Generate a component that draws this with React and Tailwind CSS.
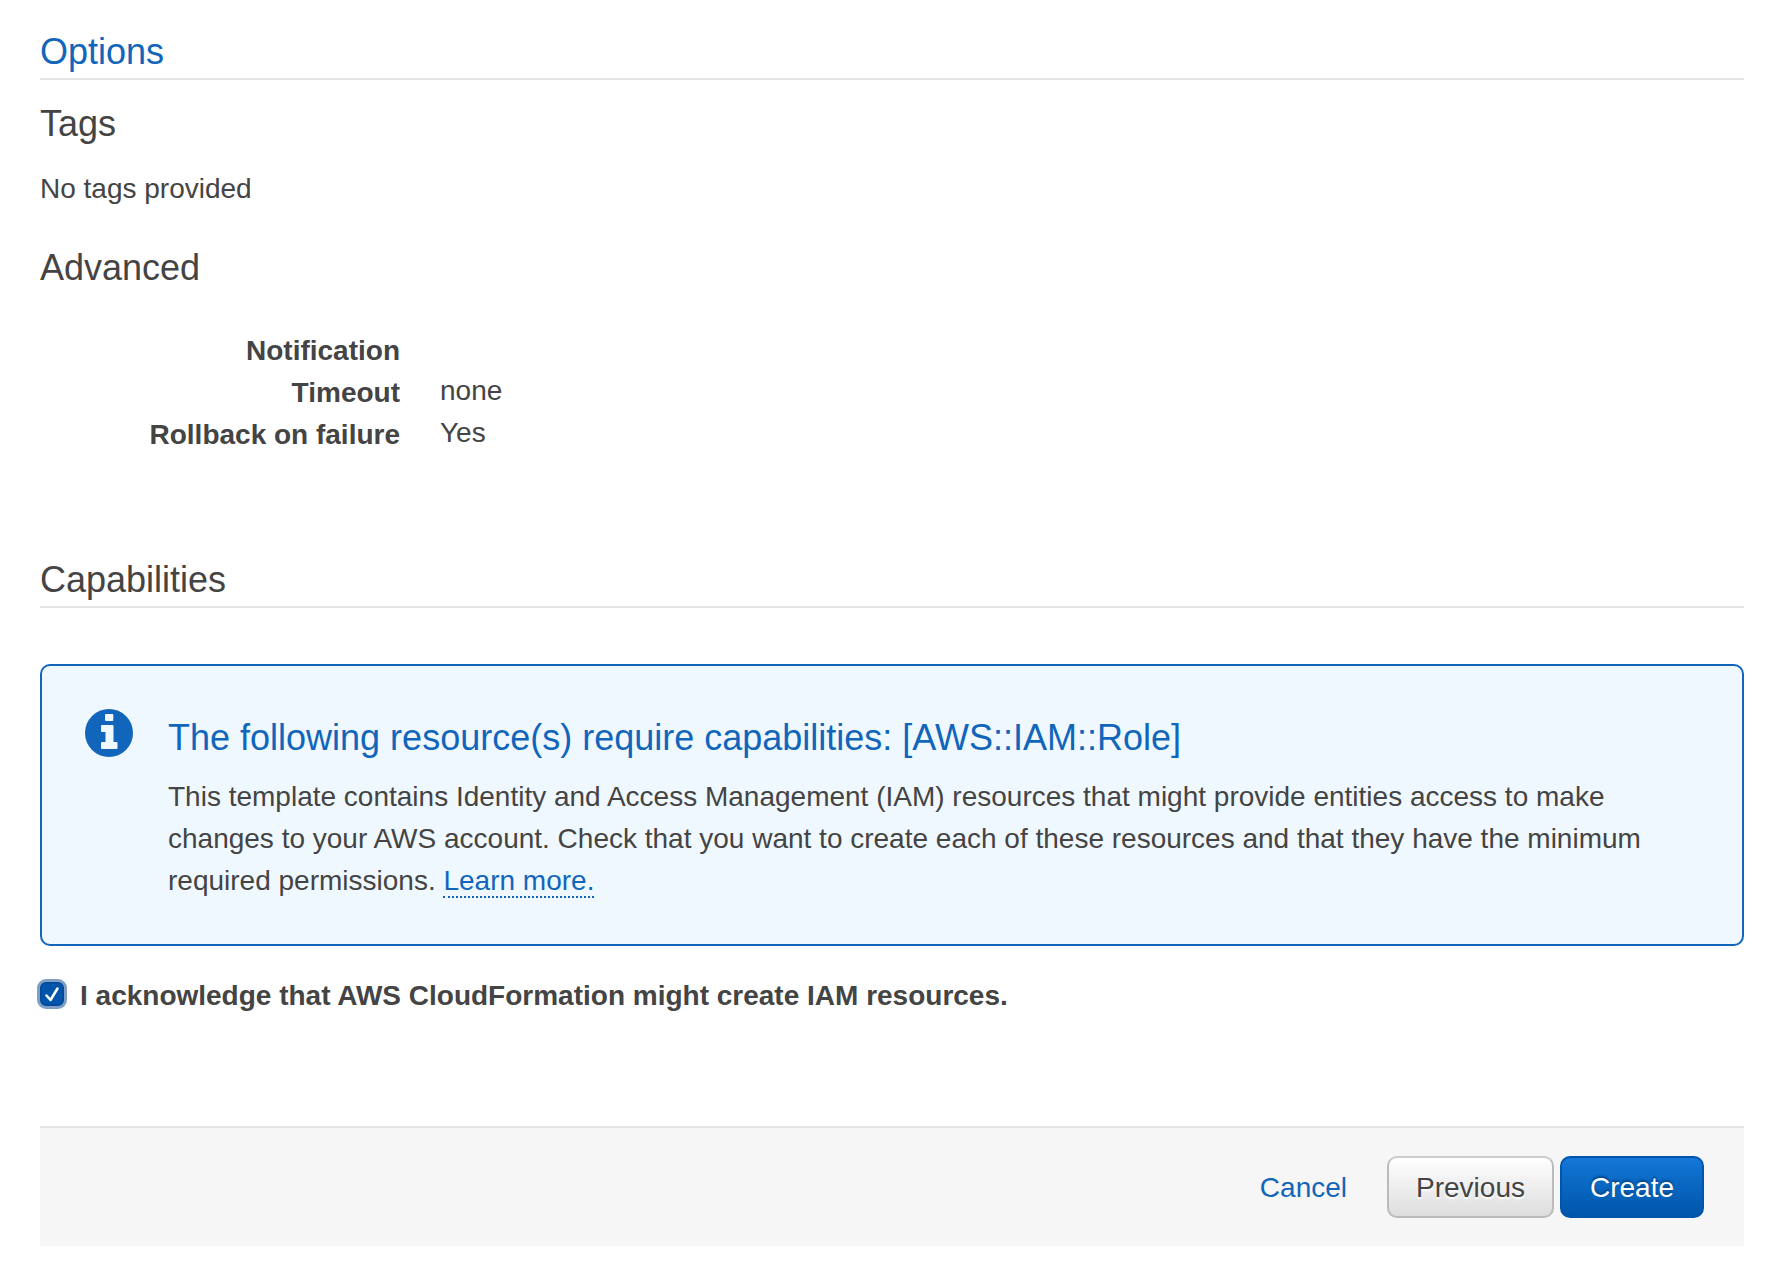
const settings = [
  { label: 'Notification', value: '' },
  { label: 'Timeout', value: 'none' },
  { label: 'Rollback on failure', value: 'Yes' },
];

function InfoIcon() {
  return (
    <svg className="size-12 shrink-0" viewBox="0 0 48 48" aria-hidden="true">
      <circle cx="24" cy="24" r="24" fill="#1166bb" />
      <rect x="20" y="5" width="8.3" height="7" rx="1" fill="#f0f8ff" />
      <path
        d="M17 16h10.500q1 0 1 1v16h3q1 0 1 1v5q0 1-1 1H17q-1 0-1-1v-5q0-1 1-1h3.500V23H17q-1 0-1-1v-5q0-1 1-1z"
        fill="#f0f8ff"
      />
    </svg>
  );
}

export default function App() {
  return (
    <main className="bg-white pt-8 pr-[30px] pb-4 pl-10 font-['Liberation_Sans',sans-serif] text-[28px] leading-[42px] text-[#444444]">
      <h2 className="border-b-2 border-[#e5e5e5] pb-1.5 text-[36px] leading-10 text-[#1166bb]">Options</h2>
      <h3 className="mt-6 text-[36px] leading-10">Tags</h3>
      <p className="mt-6">No tags provided</p>
      <h3 className="mt-[38px] text-[36px] leading-10">Advanced</h3>
      <dl className="mt-[42px]">
        {settings.map(({ label, value }) => (
          <div key={label} className="flex gap-10">
            <dt className="w-[360px] text-right font-bold">{label}</dt>
            <dd className="leading-[38px]">{value}</dd>
          </div>
        ))}
      </dl>

      <h2 className="mt-[104px] border-b-2 border-[#e5e5e5] pb-1.5 text-[36px] leading-10">Capabilities</h2>
      <section className="mt-14 flex gap-[35px] rounded-[10px] border-2 border-[#1166bb] bg-[#f0f8ff] px-[43px] pt-[43px] pb-[42px]">
        <InfoIcon />
        <div className="pt-[9px]">
          <h3 className="text-[36px] leading-10 text-[#1166bb]">
            The following resource(s) require capabilities: [AWS::IAM::Role]
          </h3>
          <p className="mt-[18px]">
            This template contains Identity and Access Management (IAM) resources that might provide entities access to
            make changes to your AWS account. Check that you want to create each of these resources and that they have
            the minimum required permissions.{' '}
            <a href="#learn-more" className="border-b-2 border-dotted border-[#1166bb] text-[#1166bb]">
              Learn more.
            </a>
          </p>
        </div>
      </section>

      <label className="mt-[29px] flex w-fit items-start gap-4 font-bold">
        <span className="grid pt-[7px]">
          <input
            type="checkbox"
            defaultChecked
            className="peer col-start-1 row-start-1 size-6 appearance-none rounded-md border-2 border-[#004b9b] bg-white shadow-[0_0_0_3px_#7fa0c4] checked:bg-[#0055aa]"
          />
          <svg
            className="pointer-events-none invisible col-start-1 row-start-1 size-6 peer-checked:visible"
            viewBox="0 0 24 24"
            fill="none"
            stroke="#ffffff"
            strokeWidth="2.5"
            strokeLinecap="round"
            strokeLinejoin="round"
            aria-hidden="true"
          >
            <path d="M6.500 13.500L10.500 18L17.500 6.500" />
          </svg>
        </span>
        I acknowledge that AWS CloudFormation might create IAM resources.
      </label>

      <footer className="mt-[109px] flex items-center justify-end border-t-2 border-[#e5e5e5] bg-[#f6f6f6] px-10 py-7">
        <button type="button" className="mr-10 pt-0.5 text-[#1166bb]">
          Cancel
        </button>
        <button
          type="button"
          className="mr-1.5 rounded-[10px] border-2 border-[#bbbbbb] border-t-[#cccccc] bg-linear-to-b from-white to-[#dddddd] px-[27px] pt-[9px] pb-[7px] text-shadow-[0_2px_2px_#ffffff]"
        >
          Previous
        </button>
        <button
          type="button"
          className="rounded-[10px] border-2 border-[#0055aa] bg-linear-to-b from-[#1477d7] to-[#0055aa] px-7 pt-[9px] pb-[7px] text-white text-shadow-[0_-2px_2px_#004488]"
        >
          Create
        </button>
      </footer>
    </main>
  );
}
